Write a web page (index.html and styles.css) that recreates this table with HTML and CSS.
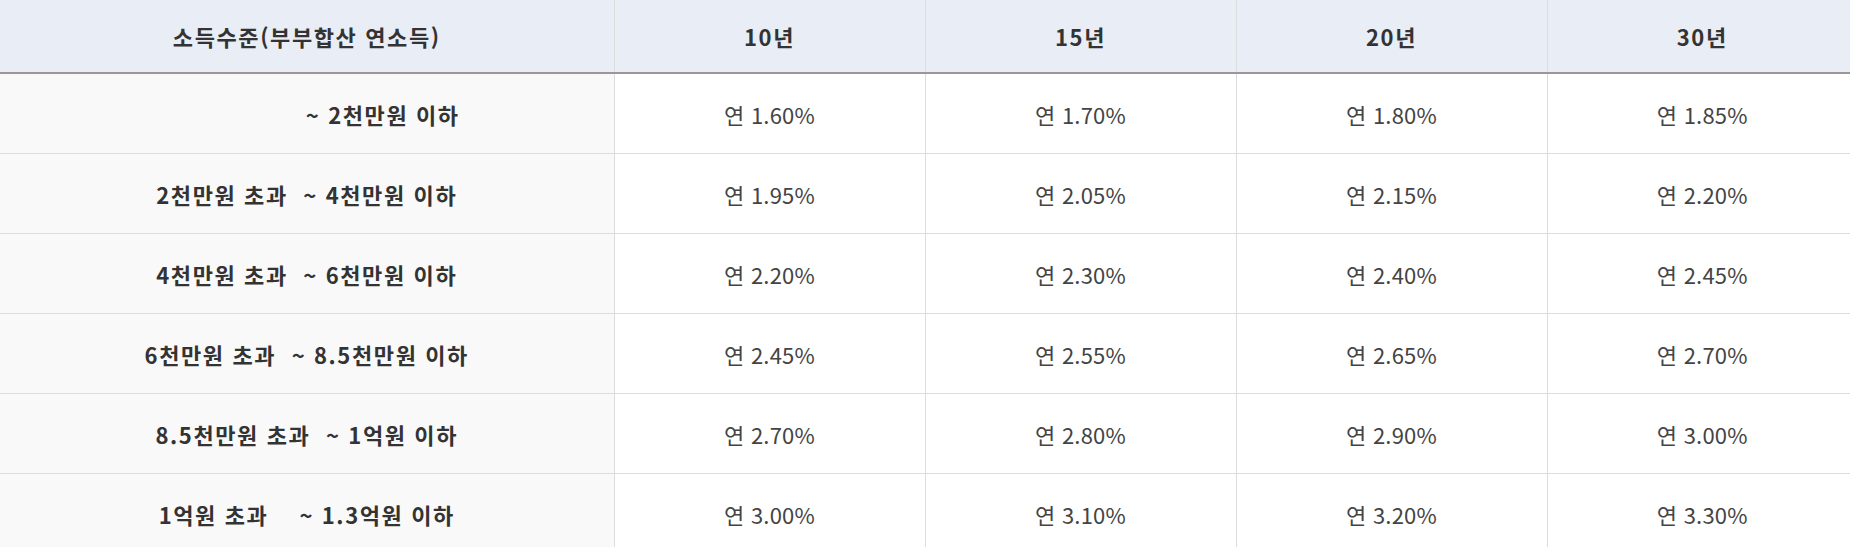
FILE: index.html
```html
<!DOCTYPE html>
<html lang="ko">
<head>
<meta charset="utf-8">
<link rel="stylesheet" href="styles.css">
</head>
<body>
<table class="rate-table">
  <colgroup>
    <col class="c-income">
    <col class="c-term">
    <col class="c-term">
    <col class="c-term">
    <col>
  </colgroup>
  <thead>
    <tr>
      <th>소득수준(부부합산 연소득)</th>
      <th>10년</th>
      <th>15년</th>
      <th>20년</th>
      <th>30년</th>
    </tr>
  </thead>
  <tbody>
    <tr>
      <td class="income first">~ 2천만원 이하</td>
      <td>연 1.60%</td><td>연 1.70%</td><td>연 1.80%</td><td>연 1.85%</td>
    </tr>
    <tr>
      <td class="income">2천만원 초과&nbsp;&nbsp;~ 4천만원 이하</td>
      <td>연 1.95%</td><td>연 2.05%</td><td>연 2.15%</td><td>연 2.20%</td>
    </tr>
    <tr>
      <td class="income">4천만원 초과&nbsp;&nbsp;~ 6천만원 이하</td>
      <td>연 2.20%</td><td>연 2.30%</td><td>연 2.40%</td><td>연 2.45%</td>
    </tr>
    <tr>
      <td class="income">6천만원 초과&nbsp;&nbsp;~ 8.5천만원 이하</td>
      <td>연 2.45%</td><td>연 2.55%</td><td>연 2.65%</td><td>연 2.70%</td>
    </tr>
    <tr>
      <td class="income">8.5천만원 초과&nbsp;&nbsp;~ 1억원 이하</td>
      <td>연 2.70%</td><td>연 2.80%</td><td>연 2.90%</td><td>연 3.00%</td>
    </tr>
    <tr>
      <td class="income">1억원 초과&nbsp;&nbsp;&nbsp;&nbsp;~ 1.3억원 이하</td>
      <td>연 3.00%</td><td>연 3.10%</td><td>연 3.20%</td><td>연 3.30%</td>
    </tr>
  </tbody>
</table>
</body>
</html>
```

FILE: styles.css
```css
html, body {
  margin: 0;
  padding: 0;
  background: #ffffff;
  overflow: hidden;
}

.rate-table {
  width: 1857px;
  border-collapse: collapse;
  table-layout: fixed;
  font-family: "Noto Sans CJK KR", "Noto Sans", sans-serif;
  font-size: 22px;
  letter-spacing: 0.2px;
  color: #444444;
}

.c-income { width: 614px; }
.c-term { width: 311px; }

.rate-table th,
.rate-table td {
  text-align: center;
  vertical-align: middle;
  border-left: 1px solid #dcdcdc;
  padding: 0;
}

.rate-table th:first-child,
.rate-table td:first-child {
  border-left: none;
}

.rate-table thead th {
  height: 72px;
  background: #e9edf5;
  color: #333333;
  font-weight: 700;
  letter-spacing: 1.6px;
  border-bottom: 2px solid #9e9595;
}

.rate-table tbody td {
  height: 79px;
  border-bottom: 1px solid #dcdcdc;
  background: #ffffff;
}

.rate-table tbody td.income {
  background: #f9f9f9;
  color: #333333;
  font-weight: 700;
  letter-spacing: 1.6px;
}

.rate-table tbody td.income.first {
  padding-left: 152px;
}
```
